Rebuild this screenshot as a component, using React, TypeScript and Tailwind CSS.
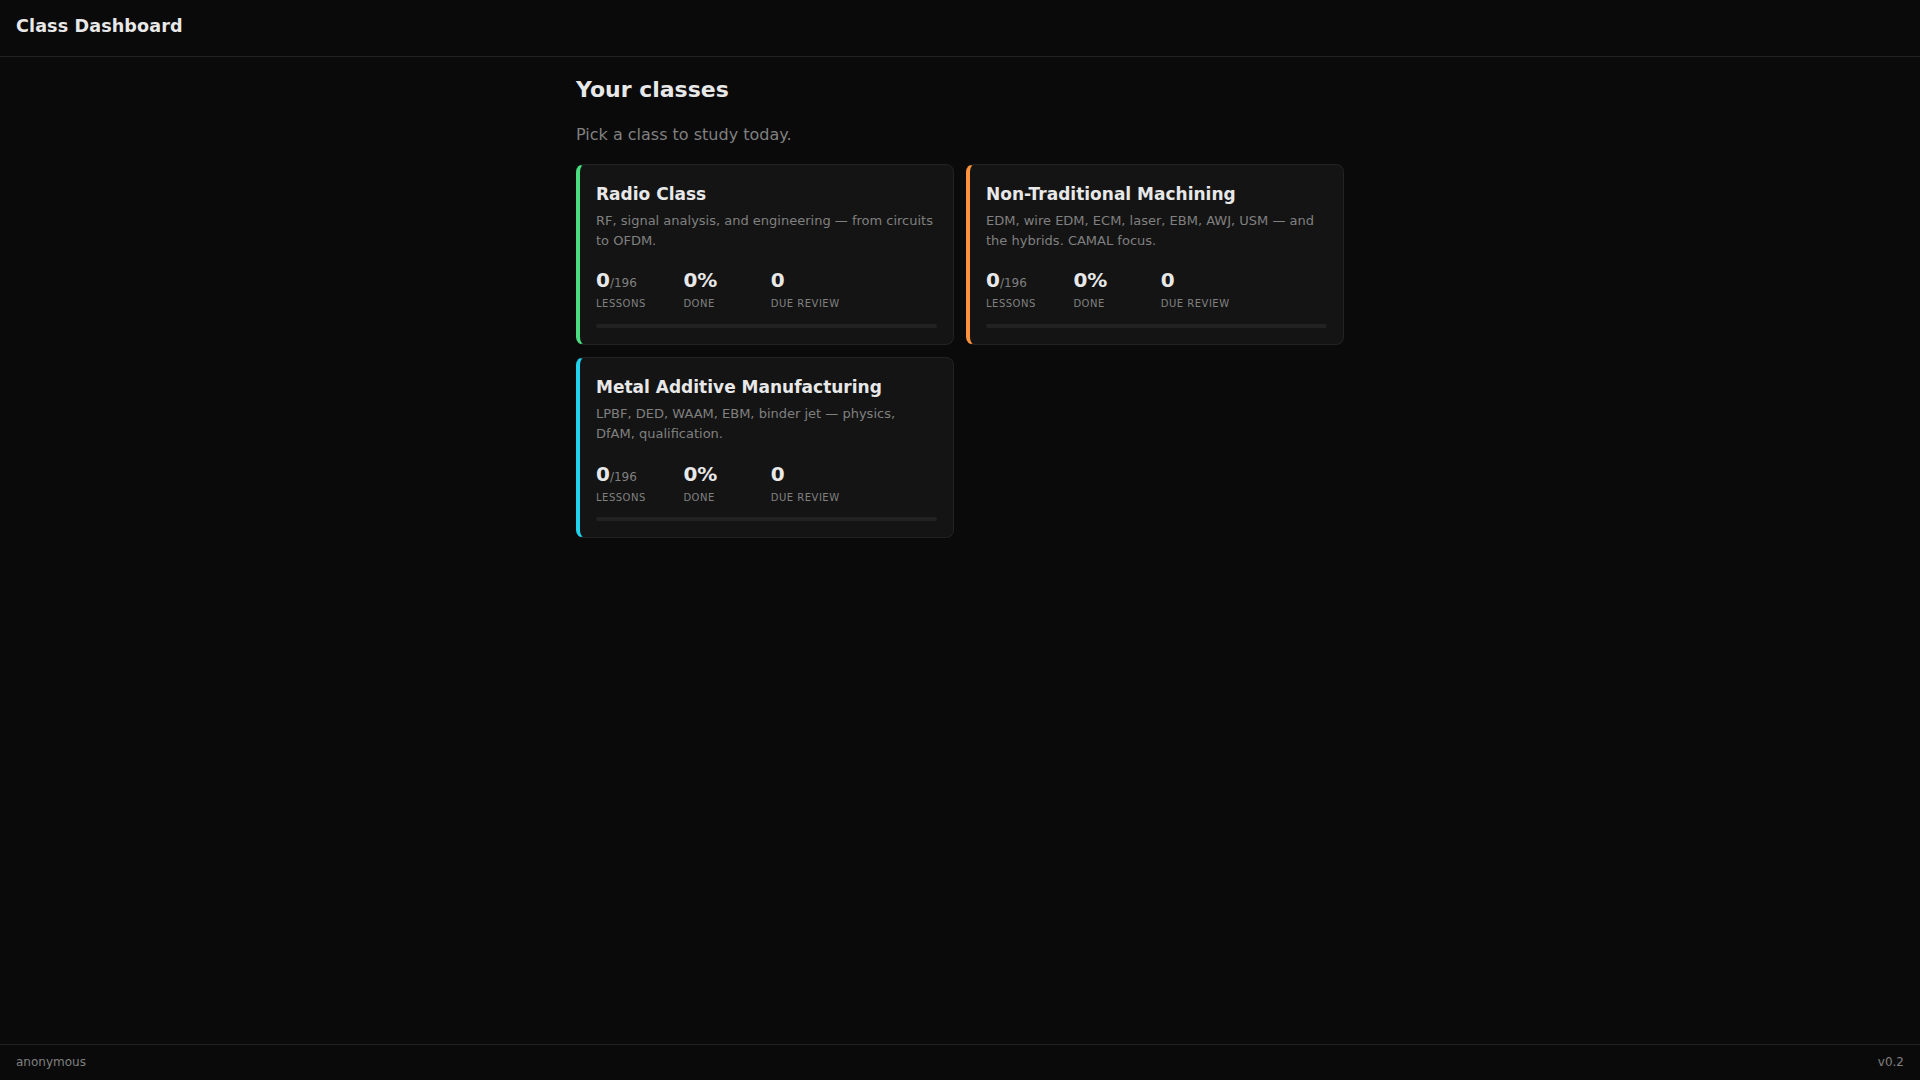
const classes = [
  {
    name: "Radio Class",
    desc: "RF, signal analysis, and engineering — from circuits to OFDM.",
    accent: "border-l-[#4ade80]",
  },
  {
    name: "Non-Traditional Machining",
    desc: "EDM, wire EDM, ECM, laser, EBM, AWJ, USM — and the hybrids. CAMAL focus.",
    accent: "border-l-[#fb923c]",
  },
  {
    name: "Metal Additive Manufacturing",
    desc: "LPBF, DED, WAAM, EBM, binder jet — physics, DfAM, qualification.",
    accent: "border-l-[#22d3ee]",
  },
];

function Stat({ value, suffix, label }: { value: string; suffix?: string; label: string }) {
  return (
    <div className="w-[87.4px]">
      <div className="text-[20px] leading-[24px] font-bold text-[#e8e8e8]">
        {value}
        {suffix && <span className="text-[12px] leading-none font-normal text-[#808080]">{suffix}</span>}
      </div>
      <div className="mt-[5px] text-[10px] leading-[14px] tracking-[0.5px] uppercase text-[#808080]">{label}</div>
    </div>
  );
}

export default function App() {
  return (
    <div className="min-h-screen flex flex-col bg-[#0a0a0a] text-[#e8e8e8] font-['DejaVu_Sans',sans-serif]">
      <header className="h-[57px] shrink-0 border-b border-[#222] px-4 pt-[14px]">
        <div className="text-[17.6px] leading-[24px] tracking-[0.1px] font-bold">Class Dashboard</div>
      </header>

      <main className="flex-1 w-[768px] mx-auto pt-[19px]">
        <h1 className="text-[22px] leading-[28px] font-bold">Your classes</h1>
        <p className="mt-[21px] text-[16px] leading-[20px] text-[#808080]">Pick a class to study today.</p>
        <div className="mt-[19px] grid grid-cols-2 gap-3">
          {classes.map((c) => (
            <div key={c.name} className={`h-[181.2px] rounded-lg border border-[#222] border-l-4 bg-[#141414] px-4 pt-[17px] ${c.accent}`}>
              <div className="text-[17px] leading-[24px] font-bold">{c.name}</div>
              <p className="mt-[5px] text-[13px] leading-[20px] text-[#808080]">{c.desc}</p>
              <div className="mt-[17.4px] flex">
                <Stat value="0" suffix="/196" label="Lessons" />
                <Stat value="0%" label="Done" />
                <Stat value="0" label="Due review" />
              </div>
              <div className="mt-[12.6px] h-[4px] rounded-full bg-[#222]" />
            </div>
          ))}
        </div>
      </main>

      <footer className="h-[36px] shrink-0 border-t border-[#222] px-4 pb-[2px] flex items-center justify-between text-[12px] text-[#808080]">
        <span>anonymous</span>
        <span>v0.2</span>
      </footer>
    </div>
  );
}
